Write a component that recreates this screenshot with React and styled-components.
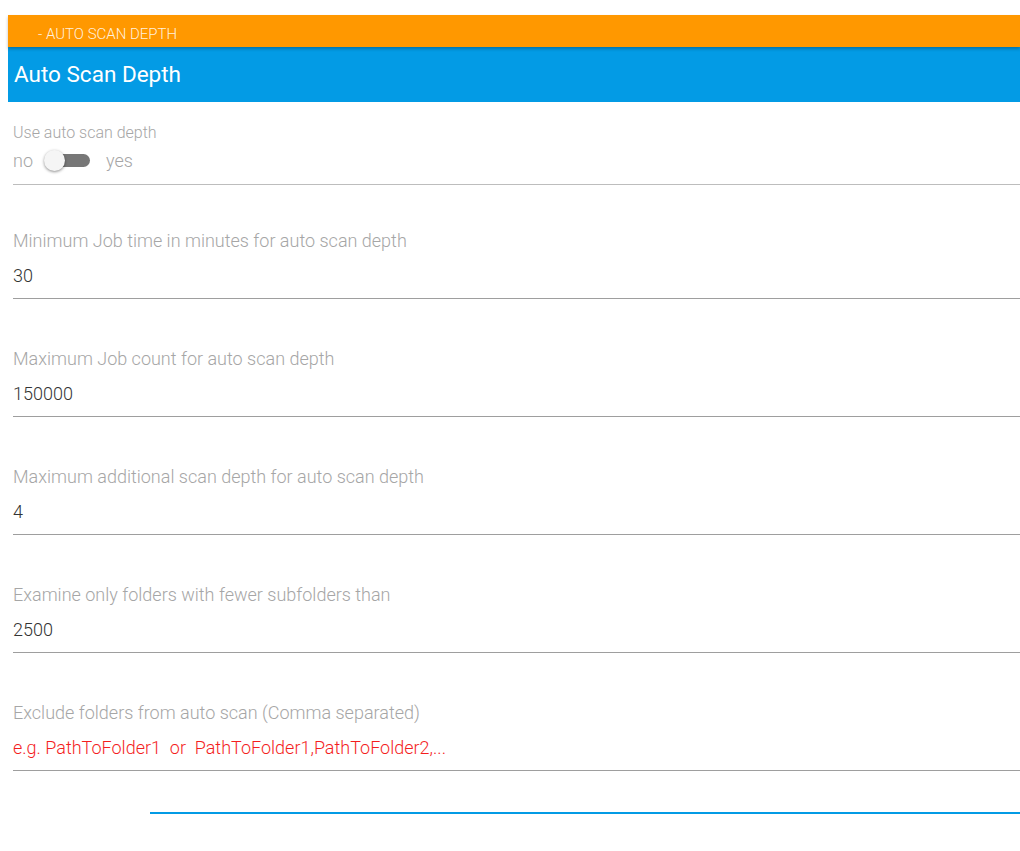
import React, { useState } from 'react';
import styled, { createGlobalStyle } from 'styled-components';

const Global = createGlobalStyle`
  html, body {
    margin: 0;
    padding: 0;
    background: #fff;
    overflow: hidden;
  }
  body {
    font-family: Roboto, "Liberation Sans", Arial, sans-serif;
    font-weight: 300;
  }
`;

const Page = styled.div`
  padding: 15px 0 0 8px;
  width: 1012px;
`;

const TabBar = styled.div`
  height: 32px;
  background: #ff9800;
  color: rgba(255, 255, 255, 0.88);
  font-size: 15px;
  font-weight: 300;
  display: flex;
  align-items: center;
  padding: 5px 0 0 30px;
  box-sizing: border-box;
  position: relative;
  z-index: 1;
  box-shadow: 0 2px 3px rgba(0, 0, 0, 0.25);
`;

const Header = styled.div`
  height: 55px;
  background: #039be5;
  color: #fff;
  font-size: 22.5px;
  font-weight: 400;
  display: flex;
  align-items: center;
  padding: 0 0 2px 6px;
  box-sizing: border-box;
`;

const Form = styled.div`
  padding: 0 0 0 5px;
  display: flex;
  flex-direction: column;
`;

const Field = styled.div`
  border-bottom: 1px solid ${p => (p.light ? '#bdbdbd' : '#9e9e9e')};
  padding-top: ${p => p.top || 0}px;
  padding-bottom: ${p => p.bottom || 0}px;
`;

const Label = styled.div`
  color: #a6a6a6;
  font-size: ${p => p.size || 18}px;
  line-height: 20px;
`;

const Value = styled.div`
  color: ${p => (p.hint ? '#f41e1e' : '#333')};
  font-size: 18px;
  line-height: 20px;
  margin-top: 15px;
`;

const ToggleRow = styled.div`
  display: flex;
  align-items: center;
  color: #a6a6a6;
  font-size: 18px;
  margin-top: 7px;
  height: 20px;
`;

const Track = styled.div`
  position: relative;
  width: 45px;
  height: 13px;
  border-radius: 7px;
  background: #777;
  margin: 0 16px 0 12px;
  cursor: pointer;
`;

const Knob = styled.div`
  position: absolute;
  top: -4px;
  left: ${p => (p.on ? 24 : -1)}px;
  width: 21px;
  height: 21px;
  border-radius: 50%;
  background: #f5f5f5;
  box-shadow: 0 1px 3px rgba(0, 0, 0, 0.45);
`;

const BlueLine = styled.div`
  margin: 41px 0 0 142px;
  height: 2px;
  background: #039be5;
`;

const fields = [
  ['Minimum Job time in minutes for auto scan depth', '30', 46],
  ['Maximum Job count for auto scan depth', '150000', 50],
  ['Maximum additional scan depth for auto scan depth', '4', 50],
  ['Examine only folders with fewer subfolders than', '2500', 50],
];

export default function App() {
  const [auto, setAuto] = useState(false);

  return (
    <>
      <Global />
      <Page>
        <TabBar>- AUTO SCAN DEPTH</TabBar>
        <Header>Auto Scan Depth</Header>
        <Form>
          <Field light top={21} bottom={14}>
            <Label size={16}>Use auto scan depth</Label>
            <ToggleRow>
              no
              <Track onClick={() => setAuto(!auto)}>
                <Knob on={auto} />
              </Track>
              yes
            </ToggleRow>
          </Field>
          {fields.map(([label, value, top]) => (
            <Field key={label} top={top} bottom={12}>
              <Label>{label}</Label>
              <Value>{value}</Value>
            </Field>
          ))}
          <Field top={50} bottom={12}>
            <Label>Exclude folders from auto scan (Comma separated)</Label>
            <Value hint>e.g. PathToFolder1&nbsp; or &nbsp;PathToFolder1,PathToFolder2,...</Value>
          </Field>
        </Form>
        <BlueLine />
      </Page>
    </>
  );
}
